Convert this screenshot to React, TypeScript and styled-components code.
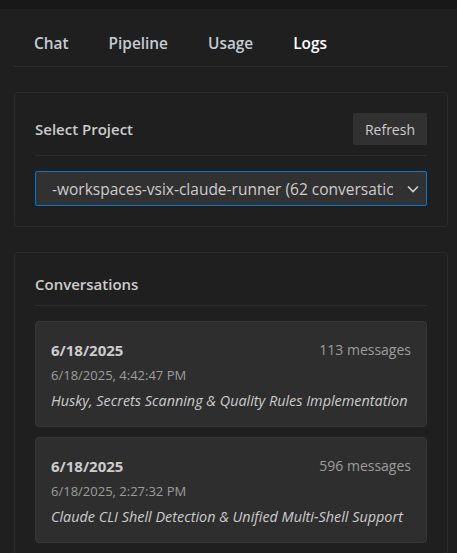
import React from 'react';
import styled, { createGlobalStyle } from 'styled-components';

const GlobalStyle = createGlobalStyle`
    body {
        margin: 0;
        background-color: #1f1f1f;
        font-family: "Open Sans", "Noto Sans", sans-serif;
        color: #cccccc;
    }
`;

const TopStrip = styled.div`
    height: 9px;
    background-color: #181818;
`;

const Page = styled.div`
    padding: 15px 9px 0 14px;
`;

const TabBar = styled.nav`
    display: flex;
    border-bottom: 1px solid #2b2b2b;
    padding-bottom: 2px;
`;

const Tab = styled.button<{ active?: boolean }>`
    background: none;
    border: none;
    padding: 10px 20px;
    font-family: inherit;
    font-size: 15.4px;
    line-height: 20px;
    font-weight: 600;
    color: ${props => (props.active ? '#ffffff' : '#c5cbd3')};
    cursor: pointer;
`;

const Panel = styled.section`
    margin-top: 25px;
    border: 1px solid #2b2b2b;
    border-radius: 4px;
    padding: 20px;
`;

const PanelHeader = styled.div`
    display: flex;
    justify-content: space-between;
    align-items: center;
    min-height: 22px;
    padding-bottom: 10px;
    border-bottom: 1px solid #2b2b2b;
    margin-bottom: 15px;
`;

const PanelTitle = styled.h3`
    margin: 0;
    padding-top: 1px;
    font-size: 15px;
    line-height: 21px;
    font-weight: 600;
    color: #cccccc;
`;

const Button = styled.button`
    height: 32px;
    padding: 0 12px;
    background-color: #313131;
    border: none;
    border-radius: 2px;
    color: #cccccc;
    font-family: inherit;
    font-size: 14px;
`;

const SelectWrap = styled.div`
    display: flex;
    align-items: center;
    gap: 14px;
    height: 33px;
    border: 1px solid #0078d4;
    border-radius: 2px;
    background-color: #313131;
    padding: 0 7px 0 16px;
    overflow: hidden;
`;

const SelectText = styled.span`
    flex: 1;
    white-space: nowrap;
    overflow: hidden;
    font-size: 15.5px;
    color: #cccccc;
`;

const CardList = styled.div`
    display: flex;
    flex-direction: column;
    gap: 10px;
`;

const Card = styled.div`
    background-color: #2e2e2e;
    border: 1px solid #383838;
    border-radius: 4px;
    padding: 15px;
`;

const CardTop = styled.div`
    display: flex;
    justify-content: space-between;
    align-items: center;
    height: 25px;
`;

const CardDate = styled.span`
    font-size: 15px;
    font-weight: 700;
    color: #cccccc;
`;

const MsgCount = styled.span`
    font-size: 14px;
    color: #9d9d9d;
`;

const CardTime = styled.div`
    margin-top: 4px;
    font-size: 13px;
    line-height: 18px;
    color: #9d9d9d;
`;

const CardTitle = styled.div`
    margin-top: 7px;
    font-size: 14.4px;
    line-height: 20px;
    font-style: italic;
    color: #cccccc;
    white-space: nowrap;
`;

const Chevron = () => (
    <svg width="12" height="8" viewBox="0 0 12 8" fill="none">
        <path d="M1 1.5l5 5 5-5" stroke="#cccccc" strokeWidth="1.7" />
    </svg>
);

const conversations = [
    { date: '6/18/2025', count: 113, time: '6/18/2025, 4:42:47 PM', title: 'Husky, Secrets Scanning & Quality Rules Implementation' },
    { date: '6/18/2025', count: 596, time: '6/18/2025, 2:27:32 PM', title: 'Claude CLI Shell Detection & Unified Multi-Shell Support' },
    { date: '6/18/2025', count: 48, time: '6/18/2025, 11:05:12 AM', title: 'Pipeline Runner Refactor' },
];

const App: React.FC = () => {
    return (
        <>
            <GlobalStyle />
            <TopStrip />
            <Page>
                <TabBar>
                    <Tab>Chat</Tab>
                    <Tab>Pipeline</Tab>
                    <Tab>Usage</Tab>
                    <Tab active>Logs</Tab>
                </TabBar>
                <Panel>
                    <PanelHeader>
                        <PanelTitle>Select Project</PanelTitle>
                        <Button>Refresh</Button>
                    </PanelHeader>
                    <SelectWrap>
                        <SelectText>-workspaces-vsix-claude-runner (62 conversations)</SelectText>
                        <Chevron />
                    </SelectWrap>
                </Panel>
                <Panel>
                    <PanelHeader>
                        <PanelTitle>Conversations</PanelTitle>
                    </PanelHeader>
                    <CardList>
                        {conversations.map((c, i) => (
                            <Card key={i}>
                                <CardTop>
                                    <CardDate>{c.date}</CardDate>
                                    <MsgCount>{c.count} messages</MsgCount>
                                </CardTop>
                                <CardTime>{c.time}</CardTime>
                                <CardTitle>{c.title}</CardTitle>
                            </Card>
                        ))}
                    </CardList>
                </Panel>
            </Page>
        </>
    );
};

export default App;
